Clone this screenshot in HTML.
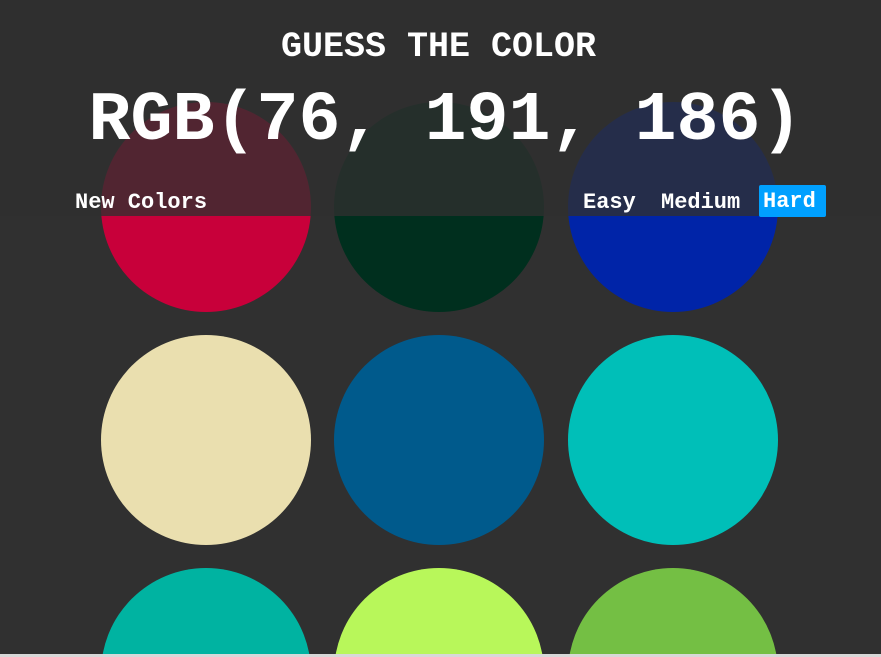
<!DOCTYPE html>
<html style="margin:0;width:881px;height:657px;overflow:hidden"><head><style>
body{margin:0;width:881px;height:657px;background:#303030;overflow:hidden;position:relative;font-family:"Liberation Mono",monospace;font-weight:bold;color:#fff}
.c{position:absolute;width:210px;height:210px;border-radius:50%}
.ov{position:absolute;left:0;top:0;width:881px;height:216px;background:rgba(48,48,48,0.78)}
.t{position:absolute;left:0;width:881px;text-align:center;white-space:nowrap}
.b{position:absolute;top:185px;height:32px;line-height:32px;font-size:22px;padding:0 4px;white-space:nowrap}
</style></head><body>
<div class="c" style="left:101px;top:102px;background:#c8003a"></div>
<div class="c" style="left:334px;top:102px;background:#002f1e"></div>
<div class="c" style="left:568px;top:102px;background:#0024a8"></div>
<div class="c" style="left:101px;top:335px;background:#eadfaf"></div>
<div class="c" style="left:334px;top:335px;background:#005a8c"></div>
<div class="c" style="left:568px;top:335px;background:#00bfb8"></div>
<div class="c" style="left:101px;top:568px;background:#00b3a1"></div>
<div class="c" style="left:334px;top:568px;background:#b8f75a"></div>
<div class="c" style="left:568px;top:568px;background:#74bf44"></div>
<div class="ov"></div>
<div class="t" style="top:26px;left:-2px;font-size:35px;line-height:42px">GUESS THE COLOR</div>
<div class="t" style="top:80px;left:5px;font-size:70px;line-height:84px">RGB(76, 191, 186)</div>
<div class="b" style="left:71px;top:187px">New Colors</div>
<div class="b" style="left:579px;top:187px">Easy</div>
<div class="b" style="left:657px;top:187px">Medium</div>
<div class="b" style="left:759px;width:59px;background:#00a0ff;border-radius:2px;line-height:34px">Hard</div>
<div style="position:absolute;left:0;top:654px;width:881px;height:3px;background:#d8d8d8"></div>
</body></html>
